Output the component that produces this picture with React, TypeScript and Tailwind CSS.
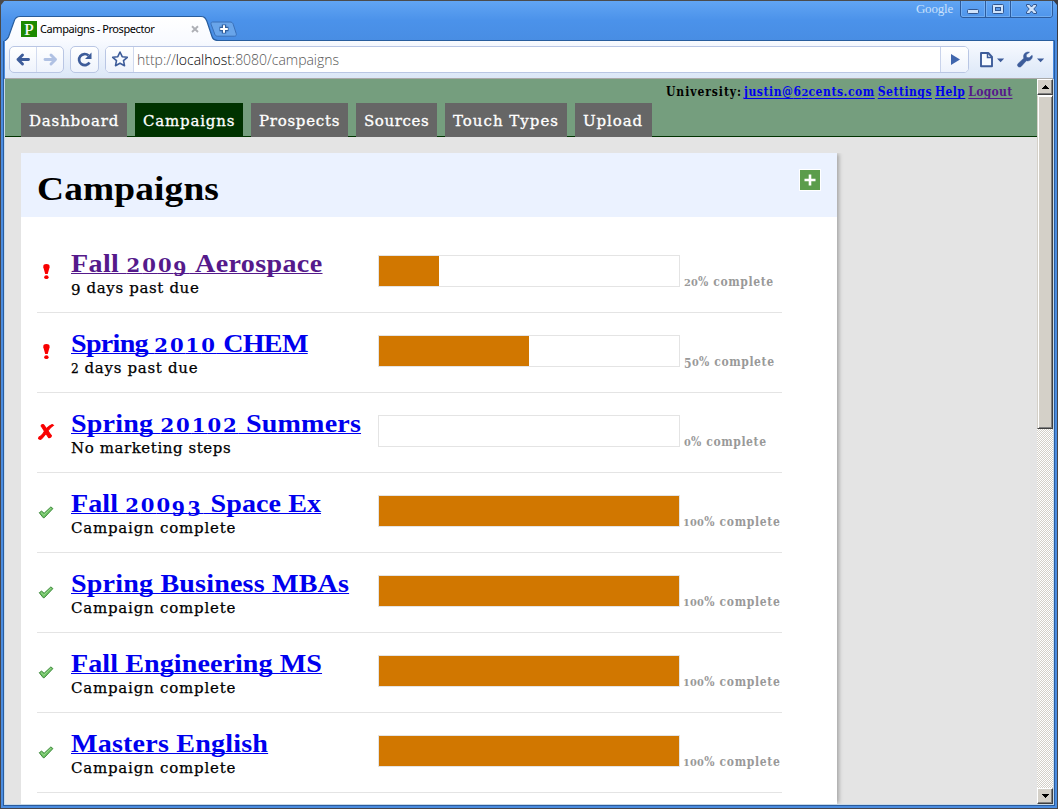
import React from "react";

type Status = "late" | "error" | "done";
type Campaign = { name: string; note: string; pct: number; status: Status; tracking: string; noteTracking: string; visited?: boolean };

const campaigns: Campaign[] = [
  { name: "Fall 2009 Aerospace", note: "9 days past due", pct: 20, status: "late", tracking: "tracking-[0.33px]", noteTracking: "tracking-[0.63px]", visited: true },
  { name: "Spring 2010 CHEM", note: "2 days past due", pct: 50, status: "late", tracking: "tracking-[-0.65px]", noteTracking: "tracking-[0.7px]" },
  { name: "Spring 20102 Summers", note: "No marketing steps", pct: 0, status: "error", tracking: "tracking-[0.17px]", noteTracking: "tracking-[0.57px]" },
  { name: "Fall 20093 Space Ex", note: "Campaign complete", pct: 100, status: "done", tracking: "tracking-[0.06px]", noteTracking: "tracking-[0.78px]" },
  { name: "Spring Business MBAs", note: "Campaign complete", pct: 100, status: "done", tracking: "tracking-[0.16px]", noteTracking: "tracking-[0.78px]" },
  { name: "Fall Engineering MS", note: "Campaign complete", pct: 100, status: "done", tracking: "tracking-[0.07px]", noteTracking: "tracking-[0.78px]" },
  { name: "Masters English", note: "Campaign complete", pct: 100, status: "done", tracking: "tracking-[0.18px]", noteTracking: "tracking-[0.78px]" },
];

const tabs = [
  { label: "Dashboard", box: "w-[106px] tracking-[0.82px]" },
  { label: "Campaigns", box: "w-[108px] tracking-[0.8px]", active: true },
  { label: "Prospects", box: "w-[97px] tracking-[0.72px]" },
  { label: "Sources", box: "w-[81px] tracking-[0.58px]" },
  { label: "Touch Types", box: "w-[122px] tracking-[1px]" },
  { label: "Upload", box: "w-[77px] tracking-[0.92px]" },
];

/* Old-style figures: 0-2 sit at x-height, 3-5, 7 and 9 drop below the baseline. */
function Figures({ text, large = false }: { text: string; large?: boolean }) {
  const low = large ? "text-[0.7em] tracking-[0.1em]" : "text-[0.82em] tracking-[0.02em]";
  return (
    <>
      {text.split(/(\d)/).map((c, i) => {
        if (!/^\d$/.test(c)) return c;
        if ("012".includes(c))
          return <span key={i} className={`font-['DejaVu_Serif',serif] leading-none [font-stretch:normal] ${low}`}>{c}</span>;
        if ("68".includes(c)) return <span key={i}>{c}</span>;
        return <span key={i} className={`align-[-0.15em] leading-none ${large ? "text-[0.9em] tracking-[0.12em]" : "tracking-[0.04em]"}`}>{c}</span>;
      })}
    </>
  );
}

function StatusIcon({ status }: { status: Status }) {
  if (status === "late")
    return (
      <svg width="18" height="18" viewBox="0 0 18 18" fill="#f80000">
        <path d="M9.400 1c2.400 0 3.500 1.200 3.200 3.200L10.700 11H8.200L6.300 4.200C6 2.200 7 1 9.400 1z" />
        <ellipse cx="9.400" cy="14.200" rx="2.200" ry="1.900" />
      </svg>
    );
  if (status === "error")
    return (
      <svg width="18" height="18" viewBox="0 0 18 18" fill="#f80000" stroke="#f80000" strokeWidth="1.100">
        <path d="M4.600 1.900c1-.6 2.100-.3 2.700.7l2 3.100C11.200 3.900 13 2.300 15.200 1.500l1.200.8c-2.300 1.500-4 3.500-5.400 5.500 1.200 2.100 2.200 3.500 3.400 4.800-.2 1.600-1.500 2.300-2.700 2-1-1.200-1.900-2.700-2.700-4.100C7.200 12.800 5.800 14.700 4.400 15.900c-1 .8-2.200.4-2.900-.5.300-1.300 1-1.900 1.900-2.100C5.100 12.300 6.400 10.200 7.500 8.200 6.200 6 5.100 4.200 4.100 3z" />
      </svg>
    );
  return (
    <svg width="18" height="18" viewBox="0 0 18 18">
      <path d="M2.300 9.700l2.300-1.600 2.500 2.200 6.800-6.400 2 1.700-8.600 9.100H6.200z" fill="#6fc266" stroke="#3f8a3d" strokeWidth="1" strokeLinejoin="round" />
      <path d="M4 9.600l2.800 2.500 7.300-7" fill="none" stroke="#a3e093" strokeWidth=".8" />
    </svg>
  );
}

function CampaignRow({ c }: { c: Campaign }) {
  return (
    <li className="flex h-20 shrink-0 border-b border-[#e4e4e4]">
      <div className="w-[34px] pt-[30px]"><StatusIcon status={c.status} /></div>
      <div className="w-[307px] pt-4">
        <a className={`block h-[29px] w-max origin-left scale-x-108 whitespace-nowrap font-['Liberation_Serif',serif] text-[26px] leading-[30px] font-bold ${c.visited ? "text-[#551a8b]" : "text-[#0000ee]"}`}>
          <span className={`underline decoration-1 underline-offset-[1px] [text-decoration-skip-ink:none] ${c.tracking}`}><Figures text={c.name} large /></span>
        </a>
        <p className={`h-5 whitespace-nowrap font-['DejaVu_Serif',serif] text-[15px] leading-5 [-webkit-text-stroke:0.25px_currentColor] ${c.noteTracking}`}><Figures text={c.note} /></p>
      </div>
      <div className="mt-[22px] h-8 w-[302px] border border-[#e4e4e4]">
        <div className="h-full bg-[#d17700]" style={{ width: `${c.pct}%` }} />
      </div>
      <span className={`mt-[39px] h-5 whitespace-nowrap font-['DejaVu_Serif',serif] text-[12px] leading-5 font-bold text-[#999] [font-stretch:condensed] ${c.pct === 100 ? "ml-[3px] tracking-[0.68px]" : "ml-1 tracking-[0.6px]"}`}>
        <Figures text={`${c.pct}% complete`} />
      </span>
    </li>
  );
}

function TitleBar() {
  return (
    <div className="relative h-[41px] shrink-0 bg-gradient-to-b from-[#62a6f4] via-[#4b92ea] to-[#488de3]">
      <svg className="absolute inset-0" width="1058" height="41" viewBox="0 0 1058 41">
        <defs>
          <linearGradient id="tab" x1="0" y1="0" x2="0" y2="1">
            <stop offset="0" stopColor="#ffffff" />
            <stop offset="1" stopColor="#f8faff" />
          </linearGradient>
        </defs>
        <path d="M0 .5H1058" stroke="#4b4b4b" />
        <path d="M0 0h5L1 5v36H0z" fill="#4a4a4a" />
        <path d="M1058 0h-5l4 5v36h1z" fill="#3a3a40" />
        <path d="M4 41.500C5 40.500 7 40 8.500 37L14 21.500C15 18 17 16.500 20 16.500H201C204.500 16.500 205.500 18 207 21.500L212 36.500C213 39.500 214.500 40.500 218 40.500H1054V42H4z" fill="url(#tab)" stroke="#285d9d" strokeWidth="1.200" />
        <path d="M212.500 22h17.500c1.800 0 2.600.7 3.200 2.200l3 9.300c.5 1.600-.2 2.700-1.700 2.700h-16.800c-1.700 0-2.500-.7-3-2.200l-3.500-9.500c-.5-1.500 0-2.500 1.300-2.500z" fill="#69a5ea" stroke="#3a70b8" />
        <path d="M224 24.500v9M219.500 29h9" stroke="#315f9c" strokeWidth="4.400" />
        <path d="M224 25.200v7.600M220.200 29h7.600" stroke="#fff" strokeWidth="2" />
        <path d="M192 26.300l6 5.700M198 26.300l-6 5.700" stroke="#aeb0b6" strokeWidth="1.900" />
        <path d="M960.500 1v14q0 2.500 2.500 2.500h79q2.500 0 2.500-2.500V1" fill="none" />
        <path d="M960.500 1v14q0 2.500 2.500 2.500h87q2.500 0 2.500-2.500V1M985.500 1v16M1010.500 1v16" fill="none" stroke="#2c5b9d" />
        <path d="M961.500 1v14q0 1.500 1.500 1.500h21.500V1M986.500 1v15.500h23V1M1011.500 1v15.500H1050q1.500 0 1.500-1.500V1" fill="none" stroke="#7fb6f4" strokeOpacity=".7" />
        <rect x="967.500" y="9.500" width="11" height="4" rx="1" fill="#cfe3fb" stroke="#31568f" />
        <rect x="992.500" y="4.500" width="11" height="9" rx="1" fill="#cfe3fb" stroke="#31568f" />
        <rect x="995.500" y="7.500" width="5" height="3" fill="#5c9aea" stroke="#31568f" />
        <path d="M1026.500 4.500h3l2 2.500 2-2.500h3v1.500l-2.700 3 2.700 3v1.500h-3l-2-2.500-2 2.500h-3V12l2.700-3-2.700-3z" fill="#cfe3fb" stroke="#31568f" />
      </svg>
      <div className="relative flex items-start">
        <div className="mt-[21px] ml-[21px] flex h-4 w-4 justify-center bg-[#1c8a00] font-['Liberation_Serif',serif] text-[17px] leading-[17px] text-white [-webkit-text-stroke:0.2px_currentColor]">P</div>
        <span className="mt-[21px] ml-[3px] font-['Noto_Sans',sans-serif] text-[11px] leading-4 tracking-[-0.42px] whitespace-nowrap text-black">Campaigns - Prospector</span>
        <span className="mt-[1px] ml-auto mr-[105px] font-['Liberation_Serif',serif] text-[13px] leading-4 tracking-[-0.2px] text-[#c9e1fc]">Google</span>
      </div>
    </div>
  );
}

const frame = "h-[27px] border border-[#b9c6e4] bg-gradient-to-b from-white to-[#eef3fc]";

function Toolbar() {
  return (
    <div className="mx-1 flex h-[38px] shrink-0 items-start border-b border-[#aaa9a9] bg-gradient-to-b from-[#f8faff] to-[#dbe7f7] pt-[5px] pl-1">
      <div className={`flex w-[55px] shrink-0 rounded-[5px] ${frame}`}>
        <svg width="53" height="25" viewBox="0 0 53 25" fill="none">
          <path d="M26.500 0v25" stroke="#d3dcf0" />
          <path d="M18.500 12.500H8M12.500 8L8 12.500l4.500 4.500" stroke="#3d5c9a" strokeWidth="2.900" strokeLinejoin="round" strokeLinecap="round" />
          <path d="M35 12.500h10.500M41 8l4.500 4.500L41 17" stroke="#b0c1e3" strokeWidth="2.900" strokeLinejoin="round" strokeLinecap="round" />
        </svg>
      </div>
      <div className={`ml-1.5 w-[29px] shrink-0 rounded-[5px] ${frame}`}>
        <svg width="27" height="25" viewBox="0 0 27 25" fill="none">
          <path d="M18.500 15.500A5.600 5.600 0 1 1 17.500 8.500" stroke="#3d5c9a" strokeWidth="2.700" />
          <path d="M20.500 5.500v6.500h-6.500z" fill="#3d5c9a" />
        </svg>
      </div>
      <div className="ml-1.5 flex h-[27px] w-[864px] shrink-0 overflow-hidden rounded-[5px] border border-[#b9c6e4] bg-white">
        <div className="h-full w-[28px] border-r border-[#d0d9ee] bg-gradient-to-b from-white to-[#eef3fc]">
          <svg width="27" height="25" viewBox="0 0 27 25">
            <path d="M14 5l2.200 4.700 5.100.6-3.800 3.400 1 5-4.500-2.500-4.500 2.500 1-5-3.800-3.400 5.100-.6z" fill="#f8fbff" stroke="#3d5c9a" strokeWidth="1.600" strokeLinejoin="round" />
          </svg>
        </div>
        <div className="ml-[3px] flex-1 font-['Open_Sans',sans-serif] text-[14px] leading-[25px] font-light tracking-[-0.02px] text-[#555]">
          http://<span className="text-black">localhost</span>:8080/campaigns
        </div>
        <div className="h-full w-[28px] border-l border-[#c9d3eb] bg-gradient-to-b from-white to-[#eef3fc]">
          <svg width="27" height="25" viewBox="0 0 27 25"><path d="M10 7l9 5.500-9 5.500z" fill="#3f66ad" /></svg>
        </div>
      </div>
      <svg className="ml-2 shrink-0" width="70" height="27" viewBox="0 0 70 27">
        <path d="M4 7h7.300l3.700 4v9.300H4z" fill="#f8fbff" stroke="#3d5c9a" strokeWidth="1.900" strokeLinejoin="round" />
        <path d="M10.500 7v4.500H15" fill="none" stroke="#3d5c9a" strokeWidth="1.500" />
        <path d="M20 12.500h7.200l-3.600 3.800zM60 12.500h7.200l-3.600 3.800z" fill="#3d5c9a" />
        <path d="M52.500 6.200c-2.500-.8-5.400.7-5.900 3.300-.2 1 0 1.900.2 2.700l-5.600 5.200c-1 1-.9 2.300-.1 3.100s2.200.8 3.100-.1l5.200-5.700c3 .9 5.800-1.300 6-4.200l-.3-1.300-3 2.600-2.600-.5-.3-2.500z" fill="#3d5c9a" stroke="#3d5c9a" strokeWidth=".5" />
      </svg>
    </div>
  );
}

const scrollButton = "flex h-4 w-4 shrink-0 items-center justify-center border border-t-white border-l-white border-r-[#404040] border-b-[#404040] bg-[#d4d0c8] shadow-[inset_-1px_-1px_#808080]";

function Scrollbar() {
  return (
    <div className="flex w-4 shrink-0 flex-col bg-[repeating-conic-gradient(#d4d0c8_0_25%,#ffffff_0_50%)] bg-[length:2px_2px]">
      <div className={scrollButton}>
        <svg width="7" height="4" viewBox="0 0 7 4" shapeRendering="crispEdges"><path d="M3 0h1v1h1v1h1v1h1v1H0V3h1V2h1V1h1z" /></svg>
      </div>
      <div className="h-[334px] border border-t-white border-l-[#d4d0c8] border-r-[#404040] border-b-[#404040] bg-[#d4d0c8] shadow-[inset_1px_1px_#fff,inset_-1px_-1px_#808080]" />
      <div className={`mt-auto ${scrollButton}`}>
        <svg width="7" height="4" viewBox="0 0 7 4" shapeRendering="crispEdges"><path d="M0 0h7v1H6v1H5v1H4v1H3V3H2V2H1V1H0z" /></svg>
      </div>
    </div>
  );
}

export default function App() {
  const link = "underline decoration-1 underline-offset-[1.5px] [text-decoration-skip-ink:none]";
  return (
    <div className="flex h-[809px] w-[1058px] flex-col overflow-hidden bg-[#4a8ce0]">
      <TitleBar />
      <div className="flex min-h-0 flex-1 flex-col border-x border-b border-[#45454b]">
        <div className="mx-[2px] mb-[2px] flex min-h-0 flex-1 flex-col border-x border-b border-[#2a5b9c]">
          <div className="-mx-[3px] flex h-[38px] shrink-0 flex-col"><Toolbar /></div>
          <div className="flex min-h-0 flex-1 border-x border-b border-[#c6d9e8]">
            <main className="flex min-w-0 flex-1 flex-col overflow-hidden bg-[#e4e4e4] text-black">
              <header className="flex h-[58px] shrink-0 flex-col border-b border-[#003300] bg-[#759e7e]">
                <div className="flex h-6 shrink-0 items-start justify-end pt-[3px] pr-[24px] font-['DejaVu_Serif',serif] text-[12px] leading-5 font-bold whitespace-nowrap [font-stretch:condensed]">
                  <span className="mr-[2px] tracking-[0.94px]">University:</span>
                  <a className={`mr-[3px] tracking-[0.55px] text-[#0000ee] ${link}`}><Figures text="justin@62cents.com" /></a>
                  <a className={`mr-[3px] tracking-[0.5px] text-[#0000ee] ${link}`}>Settings</a>
                  <a className={`mr-[3px] tracking-[0.4px] text-[#0000ee] ${link}`}>Help</a>
                  <a className={`mr-[0.5px] tracking-[0.3px] text-[#551a8b] ${link}`}>Logout</a>
                </div>
                <nav className="flex gap-2 pl-4 font-['DejaVu_Serif',serif] text-[15px] leading-[36px] text-white [-webkit-text-stroke:0.3px_currentColor]">
                  {tabs.map((t) => (
                    <a key={t.label} className={`h-[34px] shrink-0 pl-2 whitespace-nowrap ${t.box} ${t.active ? "bg-[#003300]" : "bg-[#666]"}`}>{t.label}</a>
                  ))}
                </nav>
              </header>
              <section className="mt-4 ml-4 flex w-[816px] flex-1 flex-col bg-white shadow-[3px_0_4px_-1px_#a5a5a5] [clip-path:inset(0_-8px_0_0)]">
                <div className="flex h-16 shrink-0 items-start justify-between bg-[#ebf2ff] pr-4 pl-4">
                  <h1 className="origin-left scale-x-110 pt-4 font-['Liberation_Serif',serif] text-[34px] leading-[39px] font-bold tracking-[0.12px]">Campaigns</h1>
                  <button className="mt-4 flex h-[22px] w-[22px] items-center justify-center border border-white bg-[#5b9d4b]">
                    <svg width="12" height="12" viewBox="0 0 12 12" stroke="#fff" strokeWidth="2.600"><path d="M6 .5v11M.5 6h11" /></svg>
                  </button>
                </div>
                <ul className="ml-4 flex w-[745px] flex-col pt-4">
                  {campaigns.map((c) => <CampaignRow key={c.name} c={c} />)}
                </ul>
              </section>
            </main>
            <Scrollbar />
          </div>
        </div>
      </div>
    </div>
  );
}
